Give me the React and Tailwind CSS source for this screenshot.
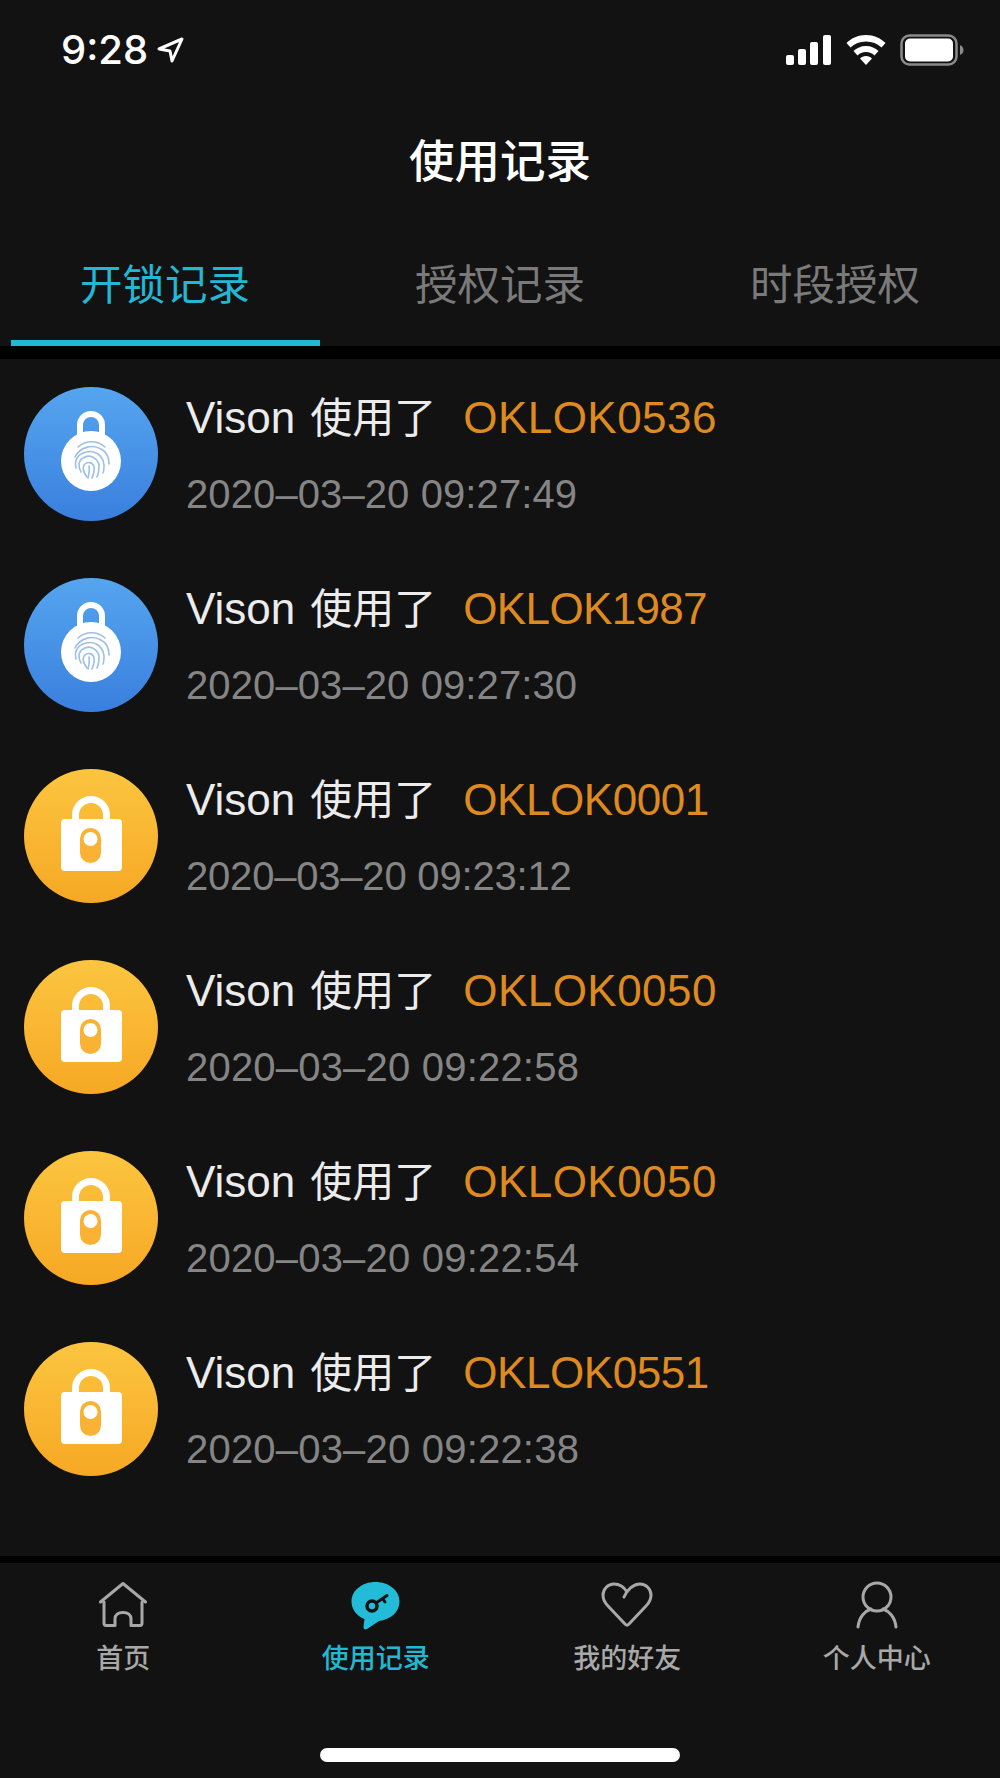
const CJK = '"Liberation Sans","Noto Sans CJK SC",sans-serif';

const rows = [
  ["OKLOK0536", "2020-03-20 09:27:49", "fp", "tracking-[0.45px]", "tracking-[0.1px]"],
  ["OKLOK1987", "2020-03-20 09:27:30", "fp", "tracking-[-0.65px]", "tracking-[0.1px]"],
  ["OKLOK0001", "2020-03-20 09:23:12", "lock", "tracking-[-0.45px]", "tracking-[-0.2px]"],
  ["OKLOK0050", "2020-03-20 09:22:58", "lock", "tracking-[0.45px]", "tracking-[0.2px]"],
  ["OKLOK0050", "2020-03-20 09:22:54", "lock", "tracking-[0.45px]", "tracking-[0.2px]"],
  ["OKLOK0551", "2020-03-20 09:22:38", "lock", "tracking-[-0.45px]", "tracking-[0.2px]"],
];

function FingerIcon() {
  return (
    <svg viewBox="0 0 134 134" className="w-full h-full">
      <path d="M56 50V38a11 11 0 0 1 22 0v12" fill="none" stroke="#fff" strokeWidth="6" />
      <circle cx="67" cy="74" r="30" fill="#fff" />
      <g fill="none" stroke="#9dbfe8" strokeWidth="1.6" strokeLinecap="round">
        <path d="M54 60c8-7 19-7 27 0" />
        <path d="M51 70c5-10 17-13 26-8 6 3 8 9 8 15" />
        <path d="M52 81c-2-8 2-14 10-16 9-2 17 3 18 13 0 3 0 6-1 8" />
        <path d="M57 85c-3-5-3-11 2-14 6-4 14-1 16 7 0 4 0 8-2 12" />
        <path d="M63 90c-3-4-5-8-3-12 3-4 9-3 10 2 1 4-1 8-2 11" />
        <path d="M65 79c1 4 0 8-1 12" />
      </g>
    </svg>
  );
}

function LockIcon() {
  return (
    <svg viewBox="0 0 134 134" className="w-full h-full">
      <path d="M51.500 54V46a15.500 15.500 0 0 1 31 0v8" fill="none" stroke="#fff" strokeWidth="7" />
      <rect x="37" y="50" width="61" height="52" rx="4" fill="#fff" />
      <rect x="56" y="59" width="21" height="35" rx="10.500" fill="#f9b233" />
      <circle cx="66.500" cy="70" r="7" fill="#fff" />
    </svg>
  );
}

function Row({ code, time, kind, codeTrack, timeTrack }) {
  return (
    <div className="h-[191px] flex items-start pl-6 pt-[28px]">
      <div
        className={
          "w-[134px] h-[134px] rounded-full shrink-0 " +
          (kind === "fp"
            ? "bg-gradient-to-b from-[#56a5ef] to-[#3a7fde]"
            : "bg-gradient-to-b from-[#fcc53f] to-[#f6a823]")
        }
      >
        {kind === "fp" ? <FingerIcon /> : <LockIcon />}
      </div>
      <div className="ml-7 mt-[6px] flex flex-col">
        <div className="flex items-baseline h-[50px] leading-[50px] text-[44px] text-[#ececec] whitespace-pre">
          <span>Vison</span>
          <span className="ml-[15px] text-[42px]">使用了</span>
          <span className={"ml-[27px] text-[#de8a1f] " + codeTrack}>{code}</span>
        </div>
        <div className={"mt-[26px] h-[50px] leading-[50px] text-[#858585] text-[40px] whitespace-pre " + timeTrack}>
          {time.replace(/-/g, "–")}
        </div>
      </div>
    </div>
  );
}

function Tab({ icon, label, active, cls = "" }) {
  return (
    <div className={"flex-1 flex flex-col items-center " + cls}>
      <div className="h-[50px] flex items-center justify-center">{icon}</div>
      <div
        className={
          "mt-[11px] text-[27px] font-medium leading-[36px] " + (active ? "text-[#22b8d4]" : "text-[#a8a8a8]")
        }
      >
        {label}
      </div>
    </div>
  );
}

export default function App() {
  return (
    <div
      className="w-[1000px] h-[1778px] bg-[#121212] flex flex-col overflow-hidden"
      style={{ fontFamily: CJK }}
    >
      {/* status */}
      <div className="h-[100px] flex items-center justify-between pl-[61px] pr-[36px] text-white">
        <div className="flex items-center gap-[8px]">
          <span className="text-[40px] font-medium leading-none" style={{ fontFamily: "Inter, sans-serif" }}>
            9:28
          </span>
          <svg width="28" height="28" viewBox="0 0 28 28">
            <path d="M26 3 3 13l11 2 2 10z" fill="none" stroke="#fff" strokeWidth="3" strokeLinejoin="round" />
          </svg>
        </div>
        <div className="flex items-center gap-[14px]">
          <svg width="46" height="30" viewBox="0 0 46 30" fill="#fff">
            <rect x="0" y="20" width="8" height="10" rx="2" />
            <rect x="12" y="14" width="8" height="16" rx="2" />
            <rect x="24" y="7" width="8" height="23" rx="2" />
            <rect x="37" y="0" width="8" height="30" rx="2" />
          </svg>
          <svg width="40" height="30" viewBox="0 0 40 30">
            <path d="M20 0C12 0 5.500 3 0.500 8l4 4.500C8.500 8.500 14 6.500 20 6.500s11.500 2 15.500 6l4-4.500C34.500 3 28 0 20 0z" fill="#fff" />
            <path d="M20 11c-5 0-9.500 2-12.500 5l4 4.500c2-2 5-3.500 8.500-3.500s6.500 1.500 8.500 3.500l4-4.500c-3-3-7.500-5-12.500-5z" fill="#fff" />
            <path d="M14 23.500c1.500-1.500 3.500-2.500 6-2.500s4.500 1 6 2.500L20 30z" fill="#fff" />
          </svg>
          <svg width="64" height="32" viewBox="0 0 64 32">
            <rect x="1.500" y="1.500" width="55" height="29" rx="8" fill="none" stroke="#8a8a8a" strokeWidth="2.500" />
            <rect x="5" y="4.500" width="48" height="23" rx="5" fill="#fff" />
            <path d="M60 11c2.500 1 3.500 3 3.500 5s-1 4-3.500 5z" fill="#8a8a8a" />
          </svg>
        </div>
      </div>

      {/* title */}
      <div className="h-[126px] flex items-center justify-center text-white text-[45.5px] font-medium">
        使用记录
      </div>

      {/* tabs */}
      <div className="h-[120px] flex shrink-0">
        <div className="w-[330px] flex flex-col items-center">
          <div className="h-[114px] flex items-center pt-[6px] text-[42.5px] text-[#22b8d4]">开锁记录</div>
          <div className="w-[309px] h-[6px] bg-[#22b8d4]" />
        </div>
        <div className="flex-1 h-[114px] flex items-center justify-center pt-[6px] text-[42.5px] text-[#7a7a7a]">授权记录</div>
        <div className="w-[330px] h-[114px] flex items-center justify-center pt-[6px] text-[42.5px] text-[#7a7a7a]">时段授权</div>
      </div>

      {/* band */}
      <div className="h-[13px] bg-black shrink-0" />

      {/* list */}
      <div className="flex-1">
        {rows.map((r, i) => (
          <Row key={i} code={r[0]} time={r[1]} kind={r[2]} codeTrack={r[3]} timeTrack={r[4]} />
        ))}
      </div>

      <div className="h-[7px] bg-black shrink-0" />

      {/* bottom nav */}
      <div className="h-[215px] shrink-0 flex flex-col">
        <div className="flex pt-[17px]">
          <Tab
            cls="pr-[6px]"
            label="首页"
            icon={
              <svg width="48" height="46" viewBox="0 0 48 46" fill="none" stroke="#a8a8a8" strokeWidth="3" strokeLinecap="round" strokeLinejoin="round">
                <path d="M1.500 20 24 1.500 46.500 20" />
                <path d="M5 20v21c0 1.500.8 2.500 2 2.500h9V37c0-4 3-6.500 8-6.500s8 2.500 8 6.500v6.500h9c1.200 0 2-1 2-2.500V20" />
              </svg>
            }
          />
          <Tab
            cls="pr-[4px]"
            active
            label="使用记录"
            icon={
              <svg width="49" height="49" viewBox="0 0 49 49">
                <path d="M24.500 1C11 1 .5 9.500.5 20.500c0 8 5.500 14.500 13 17.500l-1 7.500c-.3 2.500 1.500 3.500 3.500 2.500l12-8c11.500-1.500 20.500-9 20.500-19.500C48.500 9.500 38 1 24.500 1z" fill="#22bcd9" />
                <circle cx="21" cy="25" r="5" fill="none" stroke="#121212" strokeWidth="3.500" />
                <path d="M25 22 36 14.500M31.500 17.500l2.500 3.500" fill="none" stroke="#121212" strokeWidth="3" strokeLinecap="round" />
              </svg>
            }
          />
          <Tab
            cls="pl-[1px]"
            label="我的好友"
            icon={
              <svg width="52" height="46" viewBox="0 0 52 46" fill="none" stroke="#a8a8a8" strokeWidth="3" strokeLinecap="round" strokeLinejoin="round">
                <path d="M23 15c3-7 9-13 16-13 6 0 11 5 11 11 0 4-2 8-5 11L28 42c-1 1.500-3 1.500-4 0L7 24c-3-3-5-7-5-11C2 7 7 2 13 2c5 0 10 3 13 8" />
              </svg>
            }
          />
          <Tab
            cls="pl-[3px]"
            label="个人中心"
            icon={
              <svg width="42" height="48" viewBox="0 0 42 48" fill="none" stroke="#a8a8a8" strokeWidth="3" strokeLinecap="round">
                <circle cx="21" cy="16" r="14" />
                <path d="M2 46c1-10 7-16 13-18M40 46c-1-10-7-16-13-18" />
              </svg>
            }
          />
        </div>
        <div className="mt-[71px] self-center w-[360px] h-[14px] rounded-full bg-white" />
      </div>
    </div>
  );
}
